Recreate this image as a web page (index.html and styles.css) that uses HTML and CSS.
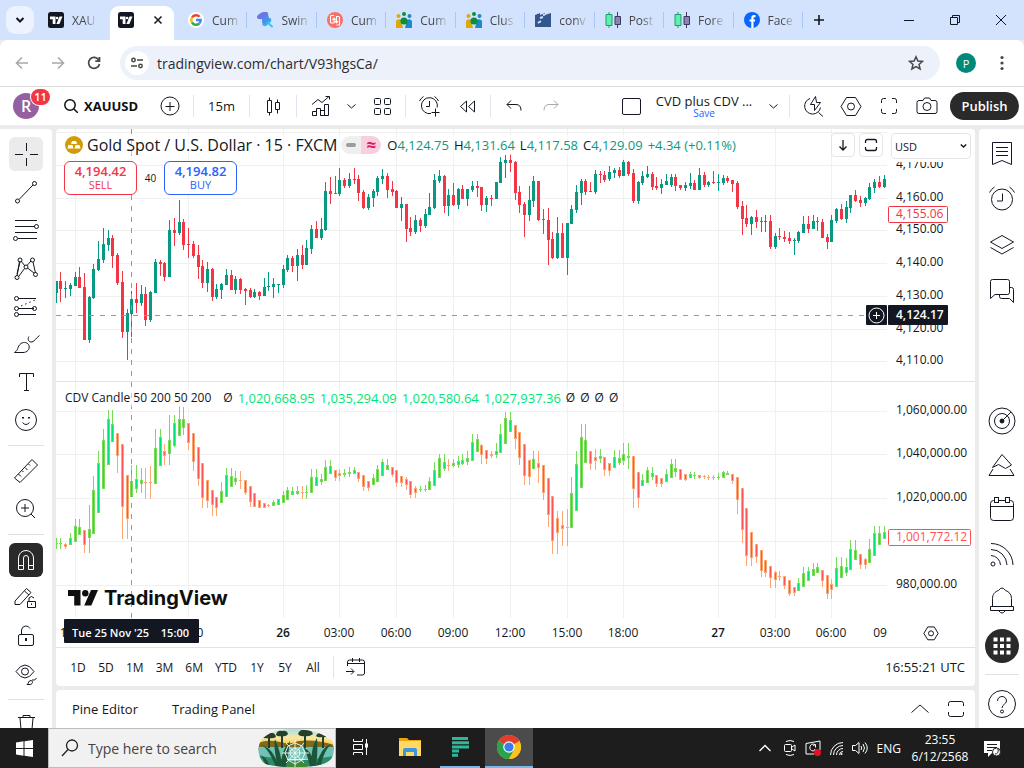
FILE: index.html
```html
<!DOCTYPE html>
<html lang="en">
<head>
  <meta charset="UTF-8" />
  <meta name="viewport" content="width=device-width, initial-scale=1.0" />
  <title>XAUUSD chart</title>
  <link rel="stylesheet" href="styles.css">
</head>
<body>
  <header class="tabs">
    <button class="tab-menu" aria-label="Search tabs"><svg width="10" height="10" viewBox="0 0 10 10"><path d="M1.5 3l3.5 3.5L8.500 3" stroke-width="2"/></svg></button>
    <a class="tab first" href="#"><svg class="fav" viewBox="0 0 16 16"><use href="#tv-fav"/></svg><span>XAU</span></a>
    <div class="tab active"><svg class="fav" viewBox="0 0 16 16"><use href="#tv-fav"/></svg><button aria-label="Close tab"><svg width="10" height="10" viewBox="0 0 10 10"><path d="M1.500 1.500l7 7M8.500 1.500l-7 7" stroke-width="1.600"/></svg></button></div>
    <nav class="tab-list">
      <a class="tab" href="#"><svg class="fav" viewBox="0 0 16 16"><circle cx="8" cy="8" r="8" fill="#fff" stroke="none"/><g stroke-width="2.400"><path d="M11.600 4.700A4.800 4.800 0 0 0 4 5.500" stroke="#ea4335"/><path d="M4 5.500a4.800 4.800 0 0 0 0 5" stroke="#fbbc04"/><path d="M4 10.500a4.800 4.800 0 0 0 7.300 1" stroke="#34a853"/><path d="M8 8h4.700a4.800 4.800 0 0 1-1.400 3.500" stroke="#4285f4"/></g></svg><span>Cum</span></a>
      <a class="tab" href="#"><svg class="fav" viewBox="0 0 16 16"><path d="M9 9l6.500 6" stroke="#35c0ee" stroke-width="1.800"/><g stroke="none"><path d="M5 13L13.500 6q2 3-.5 4.500t-3 3q-2.500 1.500-5-.5z" fill="#35b6ee"/><path d="M5 5l6-3 1 4 2 1-8 6-1-3z" fill="#4a90ee"/><ellipse cx="5.500" cy="3.500" rx="6" ry="3" transform="rotate(-25 5.500 3.500)" fill="#6a78e6"/></g></svg><span>Swin</span></a>
      <a class="tab" href="#"><svg class="fav" viewBox="0 0 16 16"><circle cx="8" cy="8" r="8" fill="#fa7067" stroke="none"/><path d="M7 3.500H4.500q-1 0-1 1V10q0 1 1 1H7V6.500M5.300 8L7 6l1.700 2M9.500 13h2q1 0 1-1V5.500q0-1-1-1h-2V10M7.800 8.800L9.500 11l1.700-2" stroke="#fff" stroke-width="1.100"/></svg><span>Cum</span></a>
      <a class="tab" href="#"><svg class="fav" viewBox="0 0 16 16"><use href="#people"/></svg><span>Cum</span></a>
      <a class="tab" href="#"><svg class="fav" viewBox="0 0 16 16"><use href="#people"/></svg><span>Clus</span></a>
      <a class="tab" href="#"><svg class="fav" viewBox="0 0 16 16"><path d="M0 15V3l5-2v2l5-2v2l6-2v14z" fill="#33568f" stroke="none"/><path d="M3 11l3-2M5 6l3-1M8 3l2-.5" stroke="#cfe0f7" stroke-width="2"/></svg><span>conv</span></a>
      <a class="tab" href="#"><svg class="fav" viewBox="0 0 16 16"><use href="#candles-fav"/></svg><span>Post</span></a>
      <a class="tab" href="#"><svg class="fav" viewBox="0 0 16 16"><use href="#candles-fav"/></svg><span>Fore</span></a>
      <a class="tab" href="#"><svg class="fav" viewBox="0 0 16 16"><circle cx="8" cy="8" r="8" fill="#0866ff" stroke="none"/><path d="M11.500 4.200H10q-1.600 0-1.600 1.700V16M5.500 8.500H11" stroke="#fff" stroke-width="2.200"/></svg><span>Face</span></a>
    </nav>
    <button class="tab-new" aria-label="New tab"><svg width="12" height="12" viewBox="0 0 12 12"><path d="M6 1v10M1 6h10" stroke-width="1.600"/></svg></button>
    <div class="window-buttons">
      <button aria-label="Minimize"><svg width="10" height="10" viewBox="0 0 10 10"><path d="M0 5.500h10"/></svg></button>
      <button aria-label="Restore"><svg width="10" height="10" viewBox="0 0 10 10"><path d="M.5 2.500h7v7h-7zM2.500 2.500v-2h7v7h-2"/></svg></button>
      <button aria-label="Close"><svg width="10" height="10" viewBox="0 0 10 10"><path d="M0 0l10 10M10 0L0 10"/></svg></button>
    </div>
  </header>

  <div class="address-bar">
    <button class="nav dim" aria-label="Back"><svg width="14" height="14" viewBox="0 0 14 14"><path d="M13 7H1.500M7 1.500L1.500 7 7 12.500" stroke-width="1.600"/></svg></button>
    <button class="nav dim" aria-label="Forward"><svg width="14" height="14" viewBox="0 0 14 14"><path d="M1 7h11.500M7 1.500L12.500 7 7 12.500" stroke-width="1.600"/></svg></button>
    <button class="nav" aria-label="Reload"><svg width="14" height="14" viewBox="0 0 14 14"><path d="M11.800 4A5.500 5.500 0 1 0 12.500 8M12.500 1v4.200H8.300" stroke-width="1.700"/></svg></button>
    <div class="url-box">
      <button class="site-info" aria-label="Site information"><svg width="14" height="14" viewBox="0 0 14 14"><path d="M7 4h6M1 10h6" stroke-width="1.600"/><circle cx="3.500" cy="4" r="1.700" stroke-width="1.500"/><circle cx="10.500" cy="10" r="1.700" stroke-width="1.500"/></svg></button>
      <input type="text" aria-label="Address" value="tradingview.com/chart/V93hgsCa/">
      <button class="star" aria-label="Bookmark"><svg width="16" height="16" viewBox="0 0 16 16"><path d="M8 1.800l1.900 4.200 4.600.4-3.500 3 1.100 4.500L8 11.500l-4.100 2.400L5 9.400l-3.500-3L6.100 6z" stroke-width="1.500"/></svg></button>
    </div>
    <button class="profile" aria-label="Profile">P</button>
    <button class="kebab" aria-label="Menu"><svg width="4" height="16" viewBox="0 0 4 16"><g fill="#474747" stroke="none"><circle cx="2" cy="2.500" r="1.600"/><circle cx="2" cy="8" r="1.600"/><circle cx="2" cy="13.500" r="1.600"/></g></svg></button>
  </div>

  <div class="topbar">
    <button class="avatar" aria-label="Account"><span class="face">R</span><span class="count">11</span></button>
    <button class="symbol"><svg width="14" height="14" viewBox="0 0 14 14"><circle cx="6" cy="6" r="5.200" stroke-width="1.500"/><path d="M10 10l4 4" stroke-width="1.500"/></svg>XAUUSD</button>
    <button class="tool" aria-label="Compare"><svg viewBox="0 0 28 28"><circle cx="14" cy="14" r="9"/><path d="M14 10v9M9.500 14.500h9"/></svg></button>
    <i class="sep"></i>
    <button class="interval">15m</button>
    <i class="sep"></i>
    <button class="tool" aria-label="Candles"><svg viewBox="0 0 28 28"><path d="M8.500 8.500h4v12h-4zM10.500 5.500v3M10.500 20.500v3M16.500 10.500h4v7h-4zM18.500 7.500v3M18.500 17.500v4"/></svg></button>
    <i class="sep"></i>
    <button class="tool" aria-label="Indicators"><svg viewBox="0 0 28 28"><path d="M6 12.500l6-5 4 3 7-6M19.500 4.500h4v3M6.500 23.500v-4h4v4zM10.500 23.500v-7h4v7M14.500 23.500v-5h4v5M18.500 23.500v-11h4v11h-8"/></svg></button>
    <button class="arrow" aria-label="Favorite indicators"><svg width="9" height="5" viewBox="0 0 9 5"><path d="M.5.500l4 3.500 4-3.500"/></svg></button>
    <button class="tool" aria-label="Templates"><svg viewBox="0 0 28 28"><rect x="6.500" y="6.500" width="6" height="6" rx="1"/><rect x="16.500" y="6.500" width="6" height="6" rx="1"/><rect x="6.500" y="16.500" width="6" height="6" rx="1"/><rect x="16.500" y="16.500" width="6" height="6" rx="1"/></svg></button>
    <i class="sep"></i>
    <button class="tool" aria-label="Create alert"><svg viewBox="0 0 28 28"><path d="M16 21.500a8 8 0 1 1 6.200-6M14.500 9v5.500H11M4.500 9a12 12 0 0 1 4-4.500M19.500 4.500a12 12 0 0 1 4 4.500M20.500 16.500v8M16.500 20.500h8"/></svg></button>
    <button class="tool" aria-label="Replay"><svg viewBox="0 0 28 28"><path d="M13.500 9v11L7.500 14.500zM21.500 9v11l-6-5.500z"/></svg></button>
    <i class="sep"></i>
    <button class="tool" aria-label="Undo"><svg viewBox="0 0 28 28"><path d="M11 8.500l-4 4 4 4M7 12.500h9q5 0 5 6"/></svg></button>
    <button class="tool dim" aria-label="Redo"><svg viewBox="0 0 28 28"><path d="M16 8.500l4 4-4 4M20 12.500h-9q-5 0-5 6"/></svg></button>
    <div class="spacer"></div>
    <button class="tool" aria-label="Layout"><svg viewBox="0 0 28 28"><rect x="5.500" y="6.500" width="18" height="16" rx="1.500"/></svg></button>
    <button class="layout-name"><span>CVD plus CDV ...</span><small>Save</small></button>
    <button class="arrow" aria-label="Manage layouts"><svg width="9" height="5" viewBox="0 0 9 5"><path d="M.5.500l4 3.500 4-3.500"/></svg></button>
    <i class="sep"></i>
    <button class="tool" aria-label="Quick search"><svg viewBox="0 0 28 28"><path d="M11 6.500a8 8 0 1 0 10.500 9M19.500 20.500l4.500 4M16.500 4.500l-5 8h4v6l6-8h-4z"/></svg></button>
    <button class="tool" aria-label="Settings"><svg viewBox="0 0 28 28"><use href="#hexnut"/></svg></button>
    <button class="tool" aria-label="Fullscreen"><svg viewBox="0 0 28 28"><path d="M6.500 11V8.500q0-2 2-2H11M17 6.500h2.500q2 0 2 2V11M21.500 17v2.500q0 2-2 2H17M11 21.500H8.500q-2 0-2-2V17"/></svg></button>
    <button class="tool" aria-label="Snapshot"><svg viewBox="0 0 28 28"><path d="M6 8.500h4l1.500-2.500h5L18 8.500h4q2 0 2 2v9q0 2-2 2H6q-2 0-2-2v-9q0-2 2-2z"/><circle cx="14" cy="14.500" r="4"/></svg></button>
    <button class="publish">Publish</button>
  </div>

  <main class="workspace">
    <div class="drawing-bar">
      <button class="on" aria-label="Cross"><svg viewBox="0 0 28 28"><path d="M14.500 3v8M14.500 18v8M3 14.500h8M18 14.500h8"/></svg></button>
      <button aria-label="Trend line"><svg viewBox="0 0 28 28"><path d="M7 21.500L21 7"/><circle cx="5.500" cy="23" r="2"/><circle cx="22.500" cy="5.500" r="2"/></svg></button>
      <button aria-label="Fib retracement"><svg viewBox="0 0 28 28"><path d="M3 4.500h22M3 10.500h19.500M3 16.500h22M6 22.500h19"/><circle cx="24.500" cy="10.500" r="2"/><circle cx="3.500" cy="22.500" r="2"/></svg></button>
      <button aria-label="Patterns"><svg viewBox="0 0 28 28"><path d="M5 22L7.500 7.500M9 7l4 5M15 11.500L19 7M21 8l2.500 11M7 22l5.500-7.500M15.500 14l6.500 5M8 8l-3 12"/><circle cx="5" cy="23.500" r="2"/><circle cx="8" cy="6" r="2"/><circle cx="14" cy="13" r="2"/><circle cx="20.500" cy="6" r="2"/><circle cx="23.500" cy="20.500" r="2"/></svg></button>
      <button aria-label="Projection"><svg viewBox="0 0 28 28"><path d="M6 6.500h18M6 16.500h16M6 22.500h18"/><path d="M9 14l14-6" stroke-dasharray="1.500 3"/><circle cx="4.500" cy="6.500" r="2"/><circle cx="4.500" cy="16.500" r="2"/><circle cx="4.500" cy="22.500" r="2"/><circle cx="22.500" cy="16.500" r="2"/></svg></button>
      <button aria-label="Brush"><svg viewBox="0 0 28 28"><path d="M2.500 22.500C7 20 4.500 17 9 13.500c3-2 7-1 8 2 1 4-2 7-6 7zM17 6.500c-2 3 0 6 3 5.500 3-1 4-4 7.500-6.500"/></svg></button>
      <button aria-label="Text"><svg viewBox="0 0 28 28"><path d="M7.500 9V5.500h14V9M14.500 5.500v17M12 22.500h5"/></svg></button>
      <button aria-label="Icons"><svg viewBox="0 0 28 28"><circle cx="14" cy="14" r="10.500"/><path d="M10.500 16.500q3.500 4 7 0"/><path d="M11 11v1.500M17 11v1.500" stroke-width="2"/></svg></button>
      <i class="rule"></i>
      <button aria-label="Measure"><svg viewBox="0 0 28 28"><path d="M2.500 21L20 2.500 25.500 8 8 25.500zM6.500 17l2.500 2.500M10 13.500l1.500 1.500M13 10.500l2.500 2.500M16.500 7l1.500 1.500"/></svg></button>
      <button aria-label="Zoom in"><svg viewBox="0 0 28 28"><circle cx="13" cy="13" r="8.500"/><path d="M13 9v8M9 13h8M19 19l4 4"/></svg></button>
      <i class="rule"></i>
      <button class="on dark" aria-label="Magnet"><svg viewBox="0 0 28 28"><path d="M6.500 23.500V12a7.500 7.500 0 0 1 15 0v11.500h-5V12a2.500 2.500 0 0 0-5 0v11.500zM6.500 19.500h5M16.500 19.500h5"/></svg></button>
      <button aria-label="Stay in drawing mode"><svg viewBox="0 0 28 28"><path d="M3 17L14.500 4.500l4.500 4L8 20.500H3zM12.500 7l4.500 4M15.500 17.500h8v6h-8zM17 17.500V14q2.500-3 5 0M19.500 19.500v1.500"/></svg></button>
      <button aria-label="Lock drawings"><svg viewBox="0 0 28 28"><rect x="6.500" y="12.500" width="15" height="11" rx="1.500"/><path d="M9.500 12.500V8a4.500 4.500 0 0 1 8.500-1.500"/><path d="M14 16v3" stroke-width="2"/></svg></button>
      <button aria-label="Hide drawings"><svg viewBox="0 0 28 28"><path d="M4 11.500q9-13 18 0-9 13-18 0z"/><circle cx="13" cy="11.500" r="3.500"/><path d="M15 24.500c2-1 1-4 4-4 3 1 1 4-1 4zM20 20q3 1 4.500-2"/></svg></button>
      <i class="rule"></i>
      <button aria-label="Remove"><svg viewBox="0 0 28 28"><path d="M6 6.500h17M11 6.500V4.500h7v2M8 7l1.500 17h10L21 7"/></svg></button>
    </div>

    <div class="center">
      <section class="chart-card">
        <div class="chart" id="chart">
          <svg id="plot"></svg>
          <div class="legend title-row">
            <svg class="gold" width="18" height="18" viewBox="0 0 18 18"><circle cx="9" cy="9" r="9" fill="#d29b0a" stroke="none"/><path d="M7 5h4l1 3H6zM3.500 9h4l1 3.500h-6zM10.500 9h4l1 3.500h-6z" fill="#fff" stroke="none"/></svg>
            <h1>Gold Spot / U.S. Dollar · 15 · FXCM</h1>
            <span class="status"><b></b><em>≈</em></span>
            <p class="ohlc"><span>O<b>4,124.75</b></span><span>H<b>4,131.64</b></span><span>L<b>4,117.58</b></span><span>C<b>4,129.09</b></span><span><b>+4.34 (+0.11%)</b></span></p>
          </div>
          <div class="legend deal-row">
            <button class="deal sell"><b>4,194.42</b>SELL</button>
            <span class="spread">40</span>
            <button class="deal buy"><b>4,194.82</b>BUY</button>
          </div>
          <div class="legend study-row"><span class="name">CDV Candle 50 200 50 200</span><span>Ø</span><b>1,020,668.95</b><b>1,035,294.09</b><b>1,020,580.64</b><b>1,027,937.36</b><span>Ø</span><span>Ø</span><span>Ø</span><span>Ø</span></div>
          <div class="pane-tools">
            <button aria-label="Move pane down"><svg width="14" height="14" viewBox="0 0 14 14"><path d="M7 2v10M3.500 8.500L7 12l3.500-3.500" stroke-width="1.300"/></svg></button>
            <button aria-label="Maximize pane"><svg width="14" height="14" viewBox="0 0 14 14"><path d="M1.500 5V3.500q0-2 2-2h7q2 0 2 2V5M1.500 9v1.500q0 2 2 2h7q2 0 2-2V9" stroke-width="1.300"/></svg></button>
            <div class="currency">
              <select aria-label="Currency"><option>USD</option></select>
              <svg width="7" height="4" viewBox="0 0 7 4"><path d="M.8.500l2.700 2.500L6.200.5" stroke-width="1.400"/></svg>
            </div>
          </div>
          <div class="brand">
            <svg width="30" height="16" viewBox="0 0 30 16"><g fill="#0f0f0f" stroke="none"><path d="M0 0h12.500v15.500H6.200V6H0z"/><circle cx="17.300" cy="3.200" r="3.200"/><path d="M23 0h7l-6.700 15.500h-7.100z"/></g></svg>
            TradingView
          </div>
        </div>
        <div class="range-bar">
          <button>1D</button><button>5D</button><button>1M</button><button>3M</button><button>6M</button><button>YTD</button><button>1Y</button><button>5Y</button><button>All</button>
          <i class="sep"></i>
          <button class="goto" aria-label="Go to date"><svg width="20" height="20" viewBox="0 0 20 20"><path d="M1.500 9V5q0-2 2-2h13q2 0 2 2v11q0 2-2 2H11M1.500 6.500h17M6.500 1v4M13.500 1v4M0 14.500h7.500M5 11.500l3 3-3 3"/></svg></button>
          <span class="clock">16:55:21 UTC</span>
        </div>
      </section>
      <section class="bottom-panel">
        <button>Pine Editor</button>
        <button>Trading Panel</button>
        <div class="spacer"></div>
        <button aria-label="Open panel"><svg width="18" height="18" viewBox="0 0 18 18"><path d="M.5 12.500L9 5l8.500 7.500"/></svg></button>
        <button aria-label="Maximize panel"><svg width="18" height="18" viewBox="0 0 18 18"><path d="M1.500 6V3.500q0-2 2-2h11q2 0 2 2V6M1.500 12v2.500q0 2 2 2h11q2 0 2-2V12"/></svg></button>
      </section>
    </div>

    <div class="widget-bar">
      <button aria-label="Watchlist"><svg viewBox="0 0 28 28"><path d="M4.500 3.500h19v22l-9.500-4-9.500 4zM8 8.500h12M8 12.500h12M8 16.500h12"/></svg></button>
      <button aria-label="Alerts"><svg viewBox="0 0 28 28"><circle cx="14" cy="14.500" r="10.500"/><path d="M14.500 8.500V16H9M1.500 7.500a15 15 0 0 1 5-5.500M21.500 2a15 15 0 0 1 5 5.500"/></svg></button>
      <button aria-label="Object tree"><svg viewBox="0 0 28 28"><path d="M14 4.500l11.500 6.500L14 17.500 2.500 11zM2.500 16.500L14 23l11.500-6.500"/></svg></button>
      <button aria-label="Chats"><svg viewBox="0 0 28 28"><path d="M4.500 2.500h15q2 0 2 2v11q0 2-2 2H7l-4.500 4v-17q0-2 2-2zM22 10.500h1.500q2 0 2 2v13l-4-4h-8q-2 0-2-2v-2"/></svg></button>
      <div class="spacer"></div>
      <button aria-label="Screener"><svg viewBox="0 0 28 28"><circle cx="14" cy="14" r="13"/><circle cx="14" cy="14" r="7.500"/><circle cx="14" cy="14" r="2" fill="#131722"/><path d="M14 14l9-9"/></svg></button>
      <button aria-label="Ideas"><svg viewBox="0 0 28 28"><path d="M14 2.500L5.500 14 4.500 15.500l6-3 7 4 6-3.500zM5 17l-4 6.500h25L22 17"/></svg></button>
      <button aria-label="Calendar"><svg viewBox="0 0 28 28"><rect x="2.500" y="3.500" width="23" height="20" rx="3"/><path d="M2.500 9.500h23"/><rect x="6.500" y=".5" width="4" height="5" fill="#fff"/><rect x="17.500" y=".5" width="4" height="5" fill="#fff"/></svg></button>
      <button aria-label="News"><svg viewBox="0 0 28 28"><circle cx="5" cy="22" r="2"/><path d="M3 13.500a10 10 0 0 1 9.500 9.500M3 7.500A16 16 0 0 1 19 23M3 1.500A22 22 0 0 1 25 23"/></svg></button>
      <button aria-label="Notifications"><svg viewBox="0 0 28 28"><path d="M4.500 19.500v-8c0-4 2.500-7 6-8q3.500-5 7 0c3.500 1 6 4 6 8v8M2.500 19.500h23v4h-23zM11 24q3 4 6 0"/></svg></button>
      <button class="apps" aria-label="Products"><svg viewBox="0 0 34 34"><circle cx="17" cy="17" r="17" fill="#2a2a2a" stroke="none"/><path d="M8.500 10.500h4M15 10.500h4M21.500 10.500h4M8.500 17h4M15 17h4M21.500 17h4M8.500 23.500h4M15 23.500h4M21.500 23.500h4" stroke="#fff" stroke-width="4"/></svg></button>
      <i class="rule"></i>
      <button aria-label="Help"><svg viewBox="0 0 28 28"><circle cx="14" cy="14" r="13.500"/><path d="M9.500 11c0-6 9-6 9 0 0 3-4.500 3.500-4.500 7"/><circle cx="14" cy="21.500" r="1.500"/></svg></button>
    </div>
  </main>

  <footer class="taskbar">
    <button class="start" aria-label="Start"><svg width="17" height="17" viewBox="0 0 17 17"><path d="M0 2.400L7.500 1.300V8H0zM8.500 1.200L17 0v8H8.500zM0 9h7.500v6.700L0 14.600zM8.500 9H17v8l-8.500-1.200z" fill="#fff" stroke="none"/></svg></button>
    <label class="search">
      <svg width="18" height="18" viewBox="0 0 18 18"><circle cx="11" cy="6.500" r="5.500" stroke-width="1.300"/><path d="M7 10.500L1 17" stroke-width="1.300"/></svg>
      <input type="search" placeholder="Type here to search">
      <svg class="scene" width="76" height="40" viewBox="0 0 76 40">
        <defs>
          <clipPath id="blob"><path d="M3 12Q14 0 38 1t36 12q4 12-1 18-6 8-35 8T5 34Q-3 24 3 12z"/></clipPath>
          <linearGradient id="sky" x2="0" y2="1"><stop offset="0" stop-color="#9fdff3"/><stop offset=".5" stop-color="#fbe6a0"/><stop offset="1" stop-color="#ffbe1e"/></linearGradient>
        </defs>
        <g clip-path="url(#blob)" stroke="none">
          <path d="M0 0h76v20H0z" fill="url(#sky)"/>
          <path d="M0 15q10-4 22-1t18-1q18-2 36 4v5H0z" fill="#7d6a1c"/>
          <path d="M0 19h76v12H0z" fill="#6fc2b5"/><path d="M0 28q20 2 30 4t46-4v12H0z" fill="#2f8a6a"/>
          <g fill="#25402a"><path d="M4 9q2-5 7-4 6-1 7 4-3 2-7 1-5 1-7-1zM18 7q1-5 6-4 5-1 6 3-2 3-6 2-4 1-6-1zM40 6q2-5 7-4 6-1 8 4-4 3-8 2-5 1-7-2zM58 8q2-4 6-3 5-1 6 3-3 2-6 1-4 1-6-1z"/><path d="M10 9h2v11h-2zM23 7h2v13h-2zM46 7h2v13h-2zM64 9h2v11h-2z"/></g>
          <g fill="#1c5638"><path d="M18 39Q11 22 4 17q12 4 16 21zM20 39q-5-20-3-28 6 13 7 28zM23 39q0-17 9-26-2 15-4 26zM58 39q4-19 15-23-9 10-10 23zM54 39q-2-19 5-29 1 16-1 29zM52 39q-3-15-7-20 10 5 12 20zM8 39Q6 30 2 27q7 2 10 12z"/></g>
          <path d="M28 37q10-8 22 0l-3 4H30z" fill="#3f8a36"/>
        </g>
        <g stroke="#f2fbf7" stroke-width=".9"><path d="M37 12v27M24 25h27M28 15l18 20M46 15L28 35"/><path d="M37 20l4 2 1 3-1 3-4 2-4-2-1-3 1-3zM37 15l7 3 3 7-3 7-7 4-7-4-3-7 3-7z"/></g>
      </svg>
    </label>
    <button class="pin view" aria-label="Task view"><svg width="17" height="16" viewBox="0 0 17 16"><path d="M1.500 0v2.500h9V0M1.500 5.500h9v5h-9zM1.500 16v-2.500h9V16M14.500 0v16"/><path d="M14.500 4.500v4" stroke-width="3"/></svg></button>
    <button class="pin" aria-label="File Explorer"><svg width="22" height="20" viewBox="0 0 22 20"><g stroke="none"><path d="M0 1h8l2 2h12v16H0z" fill="#f0a30a"/><path d="M0 4h22v15H0z" fill="#ffd865"/><path d="M4 19v-6q0-2 2-2h10q2 0 2 2v6h-3v-4H7v4z" fill="#3a96dd"/></g></svg></button>
    <button class="pin open" aria-label="Reader"><svg width="17" height="20" viewBox="0 0 17 20"><path d="M0 1.500h16M0 5.700h17M0 9.900h17M0 14.100h7M0 18.300h6" stroke="#2fb79c" stroke-width="3"/></svg></button>
    <button class="pin open current" aria-label="Chrome"><svg width="24" height="24" viewBox="0 0 24 24"><g stroke="none"><circle cx="12" cy="12" r="12" fill="#fcc31e"/><path d="M12 12L1.600 6A12 12 0 0 1 22.400 6z" fill="#e33b2e"/><path d="M12 12L1.600 6A12 12 0 0 0 12 24l5.200-9z" fill="#2ba24c"/><path d="M12 6h10.400L17 15l-5 9a12 12 0 0 0 10.400-18z" fill="#fcc31e"/><circle cx="12" cy="12" r="5.800" fill="#fff"/><circle cx="12" cy="12" r="4.600" fill="#3b7ded"/></g></svg></button>
    <div class="spacer"></div>
    <div class="tray">
      <svg class="more" width="12" height="8" viewBox="0 0 12 8"><path d="M.5 7L6 1.500 11.500 7" stroke-width="1.300"/></svg>
      <svg width="12" height="16" viewBox="0 0 12 16"><rect x=".5" y="4.500" width="7" height="7" rx="1"/><path d="M8 7l3-2v6L8 9M2 1.500q4-2 8 0M2 14.500q4 2 8 0"/></svg>
      <svg width="16" height="16" viewBox="0 0 16 16"><path d="M1 3.500L15 1v9M1 3.500V14h8M10 4.500q-4-1.500-5 2t3 4.500q2 0 2-2M8 5.500l2.500-1v3"/><circle cx="12.500" cy="12.500" r="3.500" fill="#e81123" stroke="none"/></svg>
      <svg width="13" height="13" viewBox="0 0 13 13"><path d="M.5 13A12.500 12.500 0 0 1 13 .5M3.500 13A9.500 9.500 0 0 1 13 3.500M6.500 13A6.500 6.500 0 0 1 13 6.500M9.500 13A3.500 3.500 0 0 1 13 9.500"/><circle cx="11.500" cy="12" r="1" fill="#fff" stroke="none"/></svg>
      <svg width="16" height="14" viewBox="0 0 16 14"><path d="M.5 4.500h3L7 1.500v11L3.500 9.500h-3zM9 5q1.500 2 0 4M11 3q3 4 0 8M13 1.500q4.500 5.500 0 11"/></svg>
      <span>ENG</span>
    </div>
    <div class="date"><span>23:55</span><span>6/12/2568</span></div>
    <button class="notes" aria-label="Notifications"><svg width="17" height="17" viewBox="0 0 17 17"><path d="M0 1h16v12H8l-4 4v-4H0z" fill="#fff" stroke="none"/><path d="M3 4.500h10M3 7.500h10M3 10.500h5" stroke="#1d1d1d"/><circle cx="12.500" cy="12" r="4" fill="#fff" stroke="#1d1d1d"/><path d="M11 14q4 0 3-5" stroke="#1d1d1d"/></svg></button>
  </footer>

  <!-- shared icons -->
  <svg class="sprite" aria-hidden="true">
    <symbol id="tv-fav" viewBox="0 0 16 16"><rect width="16" height="16" rx="2.500" fill="#131722" stroke="none"/><g fill="#fff" stroke="none"><path d="M2 4.500h5.500V12H4.700V7.300H2z"/><circle cx="9.100" cy="6" r="1.300"/><path d="M11.500 4.500h3L11.400 12h-3z"/></g></symbol>
    <symbol id="people" viewBox="0 0 16 16"><g stroke="none"><circle cx="8" cy="2" r="2" fill="#0a8f3c"/><circle cx="2.500" cy="4" r="2" fill="#e0a800"/><circle cx="13.500" cy="4" r="2" fill="#1e88c9"/><path d="M0 9q2-3 5-1l2 8H0z" fill="#e0a800"/><path d="M16 9q-2-3-5-1l-2 8h7z" fill="#1e88c9"/><circle cx="8" cy="9" r="3.600" fill="#0a8f3c"/></g></symbol>
    <symbol id="candles-fav" viewBox="0 0 16 16"><path d="M4 0v16" stroke="#1a9c6c"/><path d="M12.500 0v16" stroke="#3d3a5c"/><path d="M1 2.500h6v11H1z" fill="#5ff0b0" stroke="#1a9c6c"/><path d="M10 4.500h5.500v8H10z" fill="#8d83b5" stroke="#3d3a5c"/></symbol>
    <symbol id="hexnut" viewBox="0 0 28 28"><path d="M9.500 5.500h9L24 14.500l-5.500 9h-9L4 14.500z"/><circle cx="14" cy="14.500" r="3.500"/></symbol>
  </svg>
  <script src="chart.js"></script>
</body>
</html>
```

FILE: styles.css
```css
* { box-sizing: border-box; }
body, html {
  margin: 0;
  padding: 0;
  height: 100%;
}
body {
  display: flex;
  flex-direction: column;
  overflow: hidden;
  background: #ebebeb;
  color: #131722;
  font-family: "Open Sans", "Noto Sans", sans-serif;
  font-size: 13px;
}
button {
  display: flex;
  align-items: center;
  justify-content: center;
  padding: 0;
  border: none;
  background: none;
  color: inherit;
  font: inherit;
}
a {
  color: inherit;
  text-decoration: none;
}
input, select {
  font: inherit;
  color: inherit;
}
svg {
  flex: none;
  fill: none;
  stroke: currentColor;
}
.sprite {
  position: absolute;
  width: 0;
  height: 0;
}
.spacer { flex: 1; }
.sep {
  width: 1px;
  height: 22px;
  margin: 0 2px;
  background: #e0e3eb;
}

/* browser tabs */
.tabs {
  display: flex;
  flex: none;
  height: 40px;
  padding: 6px 0 0 6px;
  background: #d3e3fd;
}
.tab-menu {
  width: 28px;
  height: 28px;
  border-radius: 9px;
  background: #ecf3fe;
}
.tab {
  display: flex;
  flex: 1;
  align-items: center;
  gap: 8px;
  height: 28px;
  padding-left: 10px;
  color: #474747;
  font-size: 12px;
  white-space: nowrap;
}
.tab span {
  -webkit-mask-image: linear-gradient(90deg, #000 55%, transparent 110%);
  mask-image: linear-gradient(90deg, #000 55%, transparent 110%);
}
.fav {
  width: 16px;
  height: 16px;
}
.tab.first {
  flex: none;
  width: 72px;
  margin-left: 4px;
}
.tab.active {
  flex: none;
  width: 64px;
  height: 34px;
  padding: 0 10px 6px 8px;
  gap: 19px;
  border-radius: 9px 9px 0 0;
  background: #fff;
  color: #1f1f1f;
}
.tab-list {
  display: flex;
  flex: 0 1 625px;
  margin-left: 4px;
}
.tab-list .tab { position: relative; }
.tab-list .tab::after {
  content: "";
  position: absolute;
  top: 6px;
  right: 0;
  width: 1px;
  height: 16px;
  background: #a8c7fa;
}
.tab-new {
  width: 32px;
  height: 28px;
}
.window-buttons {
  display: flex;
  margin-left: auto;
}
.window-buttons button {
  width: 46px;
  height: 28px;
}

/* address bar */
.address-bar {
  display: flex;
  flex: none;
  align-items: center;
  height: 47px;
  padding: 0 12px 0 4px;
  border-bottom: 1px solid #dcdcdc;
  border-radius: 8px 8px 0 0;
  background: #fff;
  color: #474747;
}
.nav {
  width: 36px;
  height: 36px;
}
.dim { color: #a9a9a9; }
.url-box {
  display: flex;
  flex: 1;
  align-items: center;
  height: 34px;
  margin-left: 8px;
  padding: 0 14px 0 5px;
  border-radius: 17px;
  background: #edf1fa;
}
.site-info {
  width: 24px;
  height: 24px;
  border-radius: 50%;
  background: #fff;
}
.url-box input {
  flex: 1;
  margin-left: 8px;
  padding: 0;
  border: none;
  outline: none;
  background: none;
  color: #2b2d33;
  font-size: 14px;
}
.star {
  width: 20px;
  height: 24px;
}
.profile {
  width: 20px;
  height: 20px;
  margin-left: 16px;
  border-radius: 50%;
  background: #00897b;
  color: #fff;
  font-size: 11px;
}
.kebab {
  width: 20px;
  height: 24px;
  margin-left: 16px;
}

/* chart top toolbar */
.topbar {
  display: flex;
  flex: none;
  align-items: center;
  gap: 4px;
  height: 38px;
  padding-right: 5px;
  background: #fff;
}
.tool, .drawing-bar button {
  width: 34px;
  height: 34px;
}
.tool svg, .drawing-bar svg, .widget-bar svg {
  width: 28px;
  height: 28px;
}
.avatar {
  position: relative;
  width: 52px;
  height: 38px;
}
.face {
  width: 26px;
  height: 26px;
  border-radius: 50%;
  background: #9560a0;
  color: #fff;
  font-size: 16px;
  font-weight: 600;
  line-height: 26px;
}
.count {
  position: absolute;
  top: 2px;
  left: 31px;
  width: 19px;
  height: 16px;
  border-radius: 8px;
  background: #f23645;
  color: #fff;
  font-size: 11px;
  font-weight: 600;
  line-height: 16px;
  box-shadow: 0 0 0 1px #fff;
}
.symbol {
  gap: 6px;
  width: 93px;
  height: 34px;
  justify-content: flex-start;
  padding-left: 8px;
  color: #0f0f0f;
  font-weight: 700;
}
.interval {
  width: 43px;
  height: 34px;
}
.arrow {
  width: 20px;
  height: 34px;
}
.layout-name {
  flex-direction: column;
  width: 107px;
  padding-right: 3px;
  line-height: 14px;
  white-space: nowrap;
}
.layout-name small {
  color: #2962ff;
  font-size: 10px;
  line-height: 10px;
}
.publish {
  width: 69px;
  height: 28px;
  margin-left: 2px;
  border-radius: 14px;
  background: #2a2a2a;
  color: #fff;
  font-weight: 600;
}

/* workspace */
.workspace {
  display: flex;
  flex: 1;
  gap: 4px;
  min-height: 0;
  padding-top: 4px;
}
.drawing-bar {
  display: flex;
  flex-direction: column;
  align-items: center;
  gap: 4px;
  width: 52px;
  padding-top: 8px;
  overflow: hidden;
  border-radius: 0 4px 0 0;
  background: #fff;
}
.drawing-bar button {
  flex: none;
  border-radius: 6px;
}
.drawing-bar .on { background: #ebebeb; }
.drawing-bar .on.dark {
  background: #2a2a2a;
  color: #fff;
}
.rule {
  flex: none;
  width: 36px;
  height: 1px;
  margin: 4px 0;
  background: #e0e0e0;
}
.center {
  display: flex;
  flex: 1;
  flex-direction: column;
  gap: 4px;
  min-width: 0;
}
.chart-card {
  display: flex;
  flex: 1;
  flex-direction: column;
  min-height: 0;
  overflow: hidden;
  border-radius: 4px;
  background: #fff;
}
.chart {
  position: relative;
  flex: 1;
  min-height: 0;
}
#plot {
  display: block;
  width: 100%;
  height: 100%;
  stroke: none;
}
#plot text {
  fill: #131722;
  font-size: 12px;
}
#plot .cursor-date {
  fill: #fff;
  font-size: 11px;
  font-weight: 600;
}

/* overlays on the chart */
.legend {
  position: absolute;
  left: 9px;
  display: flex;
  align-items: center;
  white-space: nowrap;
}
.title-row {
  top: 6px;
  height: 20px;
  background: rgba(255, 255, 255, 0.5);
}
.title-row h1 {
  margin: 0 4px;
  font-size: 16px;
  font-weight: 400;
  line-height: 20px;
}
.status {
  display: flex;
  width: 40px;
  height: 18px;
  overflow: hidden;
  border-radius: 9px;
  background: linear-gradient(90deg, #efefef 50%, #f8cfe0 50%);
}
.status b {
  width: 10px;
  height: 4px;
  margin: 7px 5px;
  border-radius: 2px;
  background: #9c9c9c;
}
.status em {
  width: 20px;
  color: #d81b60;
  font-size: 17px;
  font-style: normal;
  font-weight: 700;
  line-height: 17px;
  text-align: center;
}
.ohlc {
  display: flex;
  gap: 5px;
  margin: 0 0 0 6px;
}
.ohlc b {
  color: #089981;
  font-weight: 400;
}
.deal-row {
  top: 32px;
  left: 8px;
}
.deal {
  flex-direction: column;
  width: 73px;
  height: 34px;
  border: 1px solid;
  border-radius: 6px;
  background: #fff;
  font-size: 11px;
  line-height: 14px;
}
.deal b {
  font-size: 13px;
  font-weight: 600;
}
.sell { color: #f23645; }
.buy { color: #2962ff; }
.spread {
  width: 27px;
  font-size: 10px;
  text-align: center;
}
.study-row {
  top: 260px;
  gap: 5px;
  font-size: 12px;
  line-height: 18px;
  background: rgba(255, 255, 255, 0.5);
}
.study-row .name { margin-right: 7px; }
.study-row b {
  color: #00e676;
  font-size: 13px;
  font-weight: 400;
}
.pane-tools {
  position: absolute;
  top: 0;
  right: 4px;
  display: flex;
  gap: 4px;
  padding-top: 4px;
}
.pane-tools button {
  width: 24px;
  height: 24px;
  border: 1px solid #e5e5e5;
  border-radius: 4px;
  background: #fff;
}
.currency {
  position: relative;
  width: 80px;
  height: 29px;
  margin-left: 4px;
  background: #fff;
}
.currency select {
  width: 100%;
  height: 26px;
  padding: 0 3px;
  appearance: none;
  border: 1px solid #e5e5e5;
  border-radius: 4px;
  background: #fff;
  font-size: 11px;
}
.currency svg {
  position: absolute;
  top: 11px;
  right: 4px;
}
.brand {
  position: absolute;
  left: 12px;
  bottom: 37px;
  display: flex;
  align-items: center;
  gap: 6px;
  color: #0f0f0f;
  font-family: Inter, "Open Sans", sans-serif;
  font-size: 20px;
  font-weight: 700;
  line-height: 24px;
}

/* bars under the chart */
.range-bar {
  display: flex;
  flex: none;
  align-items: center;
  gap: 12px;
  height: 39px;
  padding: 0 10px 0 14px;
  border-top: 1px solid #e0e3eb;
  font-size: 12px;
}
.range-bar button { min-width: 16px; }
.range-bar .sep { margin: 0; }
.clock {
  margin-left: auto;
  font-size: 13px;
}
.bottom-panel {
  display: flex;
  flex: none;
  align-items: center;
  gap: 18px;
  height: 38px;
  padding: 0 10px 0 16px;
  border-radius: 4px 4px 0 0;
  background: #fff;
}
.bottom-panel button:first-child { margin-right: 16px; }

/* right widget bar */
.widget-bar {
  display: flex;
  flex-direction: column;
  align-items: center;
  width: 45px;
  padding: 1px 0 2px;
  border-radius: 4px 0 0 0;
  background: #fff;
}
.widget-bar button {
  width: 45px;
  height: 46px;
}
.widget-bar .spacer ~ button { height: 45px; }
.widget-bar .apps svg {
  width: 34px;
  height: 34px;
}
.widget-bar .rule {
  width: 34px;
  margin: 6px 0;
}

/* windows taskbar */
.taskbar {
  display: flex;
  flex: none;
  align-items: center;
  height: 40px;
  background: #1d1d1d;
  color: #fff;
  font-size: 12px;
}
.start {
  width: 48px;
  height: 40px;
}
.search {
  display: flex;
  align-items: center;
  width: 288px;
  height: 40px;
  padding: 0 1px 0 12px;
  border: 1px solid #bdbdbd;
  background: #f1f1f1;
  color: #222;
}
.search input {
  flex: 1;
  min-width: 0;
  padding: 0;
  margin-left: 9px;
  border: none;
  outline: none;
  background: none;
  font-size: 14px;
}
.search input::placeholder {
  color: #444;
  opacity: 1;
}
.pin {
  width: 48px;
  height: 40px;
  margin-left: 2px;
  border-bottom: 2px solid transparent;
}
.pin.view { margin-left: 0; }
.pin.open {
  width: 40px;
  margin-left: 6px;
  border-color: #76b9ed;
}
.pin.current {
  width: 48px;
  margin-left: 5px;
  background: #4b4b4b;
}
.tray {
  display: flex;
  align-items: center;
  gap: 9px;
}
.more { margin-right: 4px; }
.date {
  display: flex;
  flex-direction: column;
  align-items: center;
  width: 54px;
  margin-left: 12px;
  line-height: 17px;
}
.notes {
  width: 50px;
  height: 40px;
  margin-right: 7px;
}
```

FILE: chart.js
```js
// side, high, body top, body bottom, low; three units to a pixel
const PRICE = `g468,468,503,533 r441,468,492,531 g468,488,492,519 g474,480,492,513 g441,456,483,483 r426,456,488,488 r444,486,644,644 g513,516,644,654
g417,432,519,522 g348,402,435,437 g309,357,405,414 g315,339,360,378 r330,339,393,429 r384,390,474,480 r438,471,620,638 g552,564,620,705
g498,522,567,635 r474,522,534,563 g480,507,534,543 r486,507,584,603 g498,501,584,591 g402,411,504,504 r405,411,416,453 r411,414,456,468
g285,315,456,456 r279,315,324,363 g225,291,324,330 r282,291,360,375 r309,357,360,399 r348,357,393,399 r360,390,426,462 r405,423,474,489
g411,432,474,501 r429,432,516,528 g477,492,516,522 g474,477,495,522 g432,450,480,480 r435,450,495,495 g453,462,495,507 r459,462,495,507
r489,492,498,540 r489,495,516,519 g492,501,516,519 r498,501,513,525 g459,486,513,513 g441,483,486,498 g459,477,486,519 g477,477,480,504
g420,432,480,489 g390,399,435,441 r393,399,423,441 g372,390,423,468 r360,390,420,432 g345,369,420,420 g300,312,372,387 r288,312,339,339
g279,312,339,345 g171,198,315,318 r156,198,207,237 r153,204,207,207 g129,165,207,213 r159,165,183,189 g144,162,183,189 r129,162,165,177
r150,162,204,228 r195,201,249,252 g207,216,249,255 g192,198,219,246 g153,159,201,213 g132,153,162,177 r144,153,195,219 r168,192,201,213
r195,198,249,249 g216,237,249,288 r237,237,312,351 r276,309,321,333 g270,285,321,327 r279,285,303,321 g252,267,303,309 g204,246,270,270
g147,165,249,252 g135,153,168,174 r150,153,243,264 g192,210,243,273 r174,210,240,243 g189,192,240,252 r180,192,222,222 g192,192,222,243
g168,183,195,201 r168,183,189,216 r186,186,240,258 g213,219,240,261 r210,219,222,243 g171,171,222,222 g96,111,174,174 g90,105,114,159
r87,105,114,141 r108,111,204,225 r183,201,240,264 r231,237,270,336 g183,225,270,288 g153,168,228,246 r168,168,285,288 r252,282,285,327
r249,285,345,420 r321,342,399,402 g276,324,399,402 r294,324,399,399 g294,294,399,450 g240,252,297,297 g180,201,255,264 g162,168,204,240
r162,168,201,210 r171,198,201,201 g135,147,201,207 r138,147,150,174 r138,150,165,171 g123,141,162,168 g129,135,144,159 r126,135,153,159
g105,111,153,153 r108,111,147,153 r132,144,228,234 g168,171,228,237 g138,153,174,180 g123,147,156,159 r141,147,186,195 r156,183,189,195
g162,177,189,207 g147,168,180,180 g147,156,180,186 r147,156,183,198 r180,180,189,195 g171,180,189,198 g144,174,183,192 r165,174,195,195
g129,150,195,195 r141,150,180,186 g168,171,180,186 r138,171,174,177 g147,171,174,198 g150,159,174,180 r153,159,168,174 r165,165,177,201
r168,174,246,252 r228,243,282,330 r240,279,297,306 g273,276,297,330 r255,276,291,309 g276,288,291,321 g270,288,291,321 r270,288,366,372
g324,333,366,372 r309,333,336,345 r318,336,342,351 r321,339,348,357 g339,345,348,390 g318,321,348,354 g273,297,324,324 r273,297,312,324
g270,288,312,312 r276,288,291,318 r282,291,339,339 r327,336,351,372 g270,285,351,351 g249,252,288,294 r237,252,282,285 g228,246,282,294
g210,210,249,264 r195,210,228,231 r213,225,234,246 g216,219,234,243 g174,186,222,225 g162,171,189,204 r153,171,186,189 g150,162,186,189`;

const DELTA = `g474,489,492,507 g474,489,492,507 r489,492,501,507 g459,474,495,495 g417,438,486,486 g417,441,465,465 r450,450,495,519 g375,447,474,519
g288,330,462,462 g213,249,399,399 g147,180,327,327 g90,117,255,255 g90,132,186,186 r159,159,228,279 r192,192,381,477 r285,285,417,477
g255,303,350,350 g255,297,327,339 g264,300,312,339 r264,306,309,357 r258,306,309,357 g147,204,312,312 g147,171,258,258 r192,213,228,255
g105,180,222,255 g105,129,198,201 g78,117,168,168 g81,117,144,165 r129,129,189,210 r159,159,246,273 r201,201,297,318 r249,249,354,384
r300,300,363,384 r330,330,375,408 r351,351,384,408 g306,333,369,369 g264,285,351,351 g264,288,321,321 g273,294,306,315 r273,300,303,327
r300,300,339,345 r318,318,366,381 r339,339,381,381 r360,360,384,384 r369,369,384,384 r372,375,378,381 g360,366,378,378 g357,357,375,375
g333,345,369,369 g321,330,360,360 g321,333,345,345 g318,333,342,345 r318,336,339,357 g315,336,339,357 g267,291,339,339 g267,291,318,318
g282,297,306,315 g240,261,303,303 g240,258,282,282 r270,270,294,303 r267,279,288,303 g267,279,285,291 g261,276,282,291 g261,270,282,282
r276,276,297,306 r285,285,321,333 r303,303,324,333 g282,294,315,315 g255,267,306,306 g237,246,288,288 g237,255,270,270 r261,261,285,291
r270,270,309,321 r288,288,309,321 r291,297,315,330 r303,303,345,354 r318,324,339,354 g318,327,330,336 g315,327,330,336 g291,303,330,330
g246,270,318,318 g222,234,294,294 g222,246,267,273 r237,255,258,273 g237,249,258,261 g228,243,255,264 g222,240,252,255 g213,234,246,255
g162,186,243,243 g162,177,216,216 r192,195,225,252 r210,210,237,252 r213,222,228,234 g189,213,225,234 g132,162,219,219 g96,114,192,192
g96,120,156,156 r135,135,177,207 r156,156,234,255 r192,192,288,315 r240,240,291,315 g213,237,267,267 r213,249,264,309 r255,255,339,360
r294,294,405,441 r348,348,483,522 r393,414,459,522 r393,435,447,498 r387,441,444,498 g291,339,444,444 g213,252,393,393 g132,171,324,324
g132,180,249,249 r213,213,252,270 r207,231,243,270 g207,228,237,249 r231,231,270,288 r249,249,273,288 g210,231,264,264 g210,234,249,255
g189,222,243,255 g189,228,234,267 r228,228,327,384 r276,276,354,384 g282,300,318,318 g261,270,309,309 g261,279,291,300 r285,285,312,321
r294,294,312,321 g267,282,306,306 g237,252,294,294 g237,264,276,291 r267,267,300,300 r282,282,300,303 g276,282,294,294 g276,285,288,297
r285,285,294,297 r285,288,291,297 r285,291,294,300 r285,291,294,300 g279,291,294,300 g273,276,294,294 g273,279,285,285 r282,282,303,312
r291,291,360,402 r324,324,450,489 r384,384,528,558 r456,456,534,558 r492,492,531,549 r510,510,573,591 r540,540,579,591 r558,558,594,624
r573,576,600,624 r573,588,591,603 r588,588,618,627 r600,600,642,648 r621,621,639,648 g594,609,633,633 g561,579,621,621 g561,573,603,603
g549,567,588,588 g549,561,579,579 r570,570,603,621 r585,585,642,657 r597,612,630,657 g531,564,621,621 g531,558,594,594 g534,561,579,588
g480,507,570,570 g480,510,540,540 r522,522,555,567 r534,537,555,567 g477,507,549,549 g438,459,528,528 g438,459,495,495 g438,456,477,477`;

const AXIS = 88;
const chart = document.getElementById("chart");
const plot = document.getElementById("plot");

function rect(x, y, w, h, fill, extra) {
  return `<rect x="${x}" y="${y}" width="${w}" height="${h}" fill="${fill}" ${extra || ""}/>`;
}
function text(x, y, str, extra) {
  return `<text x="${x}" y="${y}" ${extra || ""}>${str}</text>`;
}

function draw() {
  const w = chart.clientWidth;
  const h = chart.clientHeight;
  const pw = w - AXIS;
  const k = h / 518;
  const step = pw / 175.650;
  const Y = v => Math.round(v * k);
  const X = i => Math.floor(i * step + 0.1);
  const bottom = Y(489);
  let out = "";

  // grid
  const times = [[4, "12:00"], [28, "18:00"], [48, "26", 1], [60, "03:00"], [72, "06:00"], [84, "09:00"], [96, "12:00"],
    [108, "15:00"], [120, "18:00"], [140, "27", 1], [152, "03:00"], [164, "06:00"]];
  const prices = [[3], [36, "4,170.00"], [69, "4,160.00"], [101, "4,150.00"], [134, "4,140.00"], [167, "4,130.00"], [200, "4,120.00"], [232, "4,110.00"],
    [282, "1,060,000.00"], [325, "1,040,000.00"], [369, "1,020,000.00"], [412], [456, "980,000.00"]];
  times.forEach(t => { out += rect(X(t[0]), 0, 1, bottom, "#f0f0f0"); });
  prices.forEach(p => { out += rect(0, Y(p[0]), pw, 1, "#f0f0f0"); });
  out += rect(0, Y(252), w, 1, "#e0e3eb");

  // price candles
  PRICE.split(/\s+/).forEach((c, i) => {
    const color = c[0] === "g" ? "#089981" : "#f23645";
    const [hi, top, bot, lo] = c.slice(1).split(",").map(v => Y(v / 3 - 4));
    const x = X(i);
    out += rect(x, hi, 1, Math.max(1, lo - hi), color) + rect(x - 1, top, 3, Math.max(1, bot - top), color);
  });

  // volume delta candles
  DELTA.split(/\s+/).forEach((c, i) => {
    const edge = c[0] === "g" ? "#76dd57" : "#ffa473";
    const fill = c[0] === "g" ? "#00e676" : "#ff5252";
    const [hi, top, bot, lo] = c.slice(1).split(",").map(v => Y(v / 3 + 251));
    const x = X(i);
    out += rect(x, hi, 1, Math.max(1, lo - hi), edge) + rect(x - 1, top, 3, Math.max(1, bot - top), edge);
    if (bot - top > 2) out += rect(x, top + 1, 1, bot - top - 2, fill);
  });

  // crosshair
  const cx = X(16);
  const cy = Y(186);
  const dash = 'stroke="#9598a1" stroke-dasharray="5 6"';
  out += `<path d="M${cx + 0.5} 0V${bottom}M0 ${cy + 0.5}H${pw - 22}" ${dash}/>`;

  // scales
  prices.forEach(p => { if (p[1]) out += text(pw + 9, Y(p[0]) + 3, p[1]); });
  times.forEach(t => { out += text(X(t[0]), Y(508), t[1], `text-anchor="middle" ${t[2] ? 'font-weight="600"' : ""}`); });
  out += text(pw - 7, Y(508), "09", 'text-anchor="middle"');
  out += `<svg x="${w - 54}" y="${Y(504) - 10}" width="20" height="20" viewBox="0 0 28 28" stroke="#131722" stroke-width="1.400"><use href="#hexnut"/></svg>`;

  // axis markers
  out += rect(pw + 1.5, Y(77) + 0.5, 59, 16, "#fff", 'rx="1" stroke="#f23645"') + text(pw + 9, Y(89), "4,155.06", 'style="fill:#f23645"');
  out += rect(pw + 1.5, Y(400) + 0.5, 82, 16, "#fff", 'rx="1" stroke="#ff5252"') + text(pw + 9, Y(412), "1,001,772.12", 'style="fill:#ff5252"');
  out += rect(pw - 21, cy - 10, 21, 20, "#131722", 'rx="1"') + rect(pw + 1, cy - 10, 60, 20, "#131722", 'rx="1"');
  out += `<g stroke="#fff" fill="none"><circle cx="${pw - 10.5}" cy="${cy + 0.5}" r="7.500"/><path d="M${pw - 14} ${cy + 0.5}h7M${pw - 10.5} ${cy - 3}v7"/></g>`;
  out += text(pw + 9, cy + 4, "4,124.17", 'font-weight="600" style="fill:#fff"');
  out += rect(cx - 67, Y(490), 135, 24, "#131722", 'rx="1"');
  out += text(cx - 59, Y(508), "Tue 25 Nov '25", 'class="cursor-date"') + text(cx + 58, Y(508), "15:00", 'class="cursor-date" text-anchor="end"');

  plot.innerHTML = out;
}

draw();
window.addEventListener("resize", draw);
```
